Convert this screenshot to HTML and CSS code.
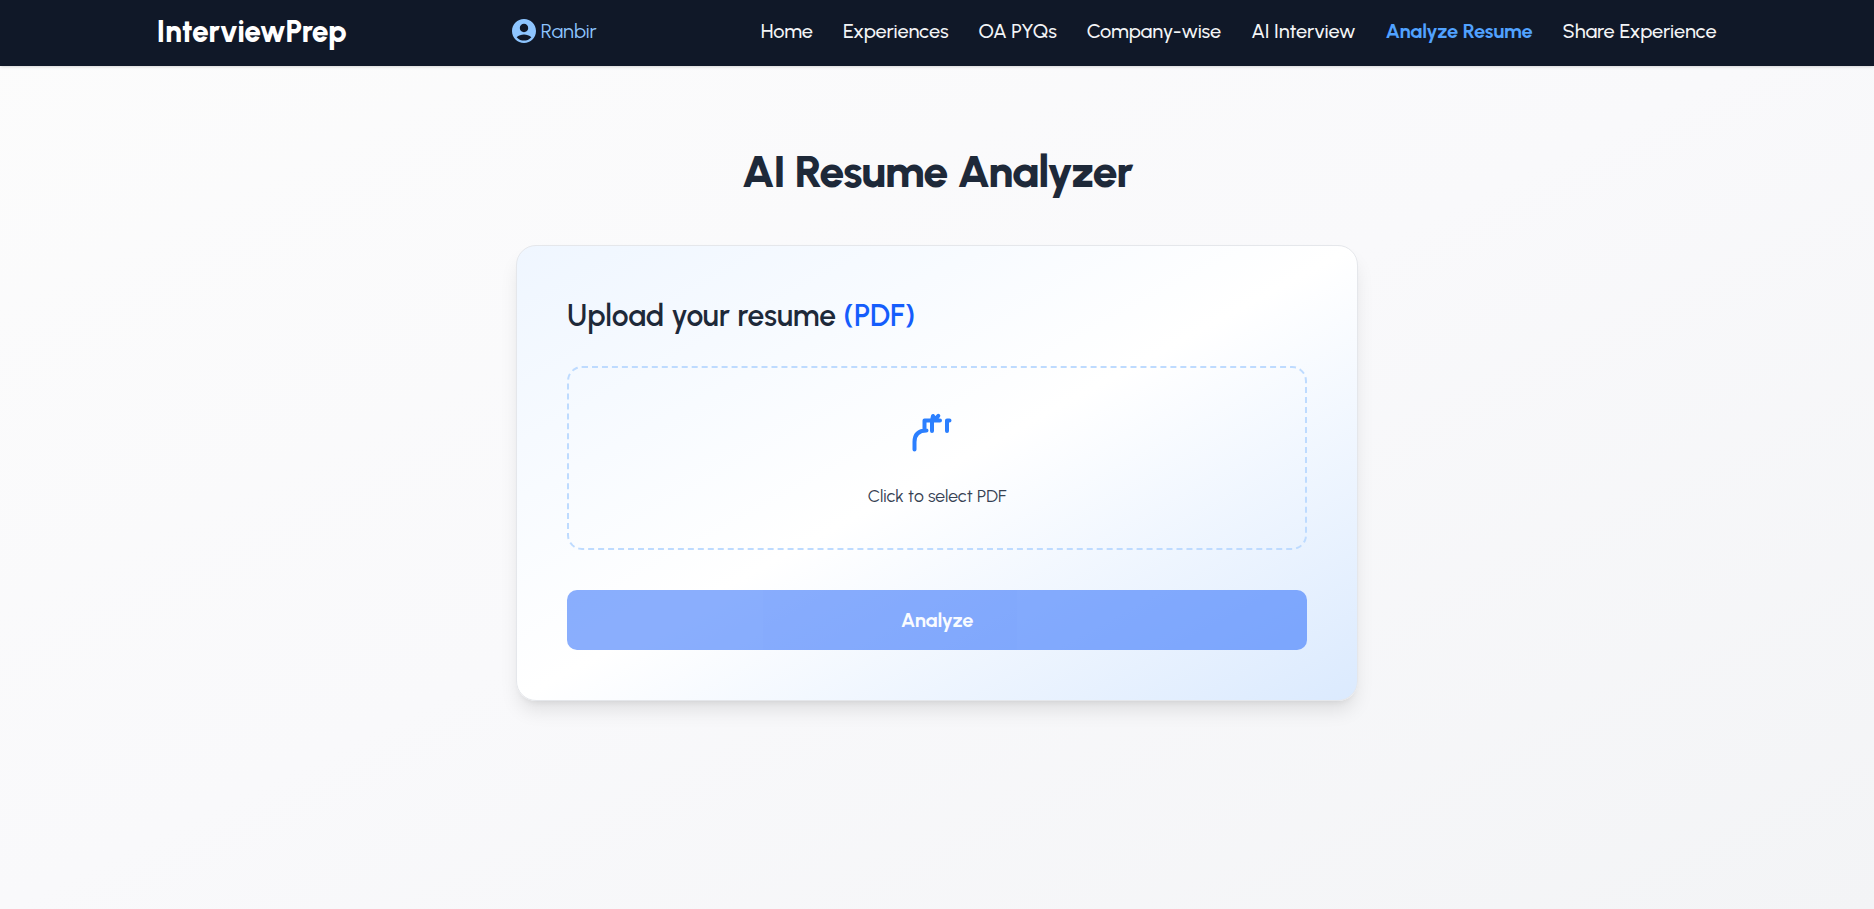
FILE: index.html
```html
<!DOCTYPE html>
<html lang="en">
<head>
<meta charset="utf-8">
<title>InterviewPrep</title>
<link rel="stylesheet" href="styles.css">
</head>
<body>
<header class="navbar">
  <a class="brand">InterviewPrep</a>
  <a class="user">
    <svg class="user-icon" viewBox="2 2 20 20"><path fill="currentColor" d="M12 2C6.48 2 2 6.48 2 12s4.480 10 10 10 10-4.480 10-10S17.520 2 12 2zm0 4c1.930 0 3.500 1.570 3.500 3.500S13.930 13 12 13s-3.500-1.570-3.500-3.500S10.070 6 12 6zm0 14c-2.030 0-4.430-.820-6.140-2.880C7.550 15.800 9.680 15 12 15s4.450.8 6.140 2.120C16.430 19.180 14.030 20 12 20z"/></svg>
    <span class="user-name">Ranbir</span>
  </a>
  <nav class="links">
    <a class="link">Home</a>
    <a class="link">Experiences</a>
    <a class="link">OA PYQs</a>
    <a class="link">Company-wise</a>
    <a class="link">AI Interview</a>
    <a class="link active">Analyze Resume</a>
    <a class="link">Share Experience</a>
  </nav>
</header>
<main class="page">
  <h1 class="title">AI Resume Analyzer</h1>
  <section class="card">
    <h2 class="subtitle"><span class="label">Upload your resume</span> <span class="format">(PDF)</span></h2>
    <div class="dropzone">
      <svg class="upload-icon" viewBox="0 0 52 50"><path d="M8.500 41.500V34Q8.500 22.500 20.500 22.500H18.500V12.500H34M26 23V12.500L27 8L30 12.500M32.300 7.800L28 12.500M41 23V12.500H43.500"/></svg>
      <span class="hint">Click to select PDF</span>
    </div>
    <button class="analyze"><span class="analyze-text">Analyze</span></button>
  </section>
</main>
</body>
</html>
```
FILE: styles.css
```css
* { box-sizing: border-box; margin: 0; padding: 0; }
body {
  height: 909px;
  overflow: hidden;
  font-family: Urbanist, Lato, sans-serif;
  color: #1e2939;
  background: linear-gradient(to bottom right, #fcfcfc, #f9f9fb 50%, #f3f4f6);
}
.navbar {
  position: relative;
  height: 66px;
  padding: 0 157.5px 4px 156.5px;
  display: flex;
  align-items: center;
  justify-content: space-between;
  background: #101828;
  color: #f3f4f6;
  box-shadow: 0 1.25px 3.75px rgba(0,0,0,.1), 0 1.25px 2.5px -1.25px rgba(0,0,0,.1);
  white-space: nowrap;
}
.brand { width: 190px; font-size: 30px; font-weight: 800; letter-spacing: -.2px; color: #fff; }
.user { width: 86px; margin-left: 2px; display: flex; align-items: center; gap: 5px; color: #8ec5ff; font-size: 20px; }
.user-icon { width: 24px; height: 24px; flex: none; }
.links { display: flex; gap: 30px; font-size: 20px; font-weight: 500; letter-spacing: -.08px; }
.active { color: #51a2ff; font-weight: 700; letter-spacing: -.12px; }
.page { display: flex; flex-direction: column; align-items: center; padding-top: 75px; }
.title { font-size: 45px; line-height: 60px; font-weight: 800; letter-spacing: -1.125px; white-space: nowrap; }
.card {
  width: 842px;
  height: 456px;
  margin-top: 44px;
  padding: 50px;
  border: 1px solid #e5e7eb;
  border-radius: 20px;
  background: linear-gradient(to bottom right, #eff6ff, #fff 50%, #dbeafe);
  box-shadow: 0 12.5px 18.75px -3.75px rgba(0,0,0,.1), 0 5px 7.5px -5px rgba(0,0,0,.1);
}
.subtitle { height: 40px; line-height: 40px; font-size: 30px; font-weight: 600; white-space: nowrap; }
.format { color: #155dfc; }
.dropzone {
  height: 184px;
  margin-top: 30px;
  padding-top: 40px;
  border: 2px dashed #bedbff;
  border-radius: 15px;
  display: flex;
  flex-direction: column;
  align-items: center;
}
.upload-icon { width: 52px; height: 50px; margin-right: 10px; fill: none; stroke: #2b7fff; stroke-width: 4; stroke-linecap: round; stroke-linejoin: round; }
.hint { margin-top: 26px; font-size: 17.5px; line-height: 24px; color: #364153; }
.analyze {
  width: 100%;
  height: 60px;
  margin-top: 40px;
  border: 0;
  border-radius: 10px;
  background: #155dfc;
  opacity: .5;
  color: #fff;
  font: 700 20px Urbanist, Lato, sans-serif;
  letter-spacing: -.15px;
}
```
